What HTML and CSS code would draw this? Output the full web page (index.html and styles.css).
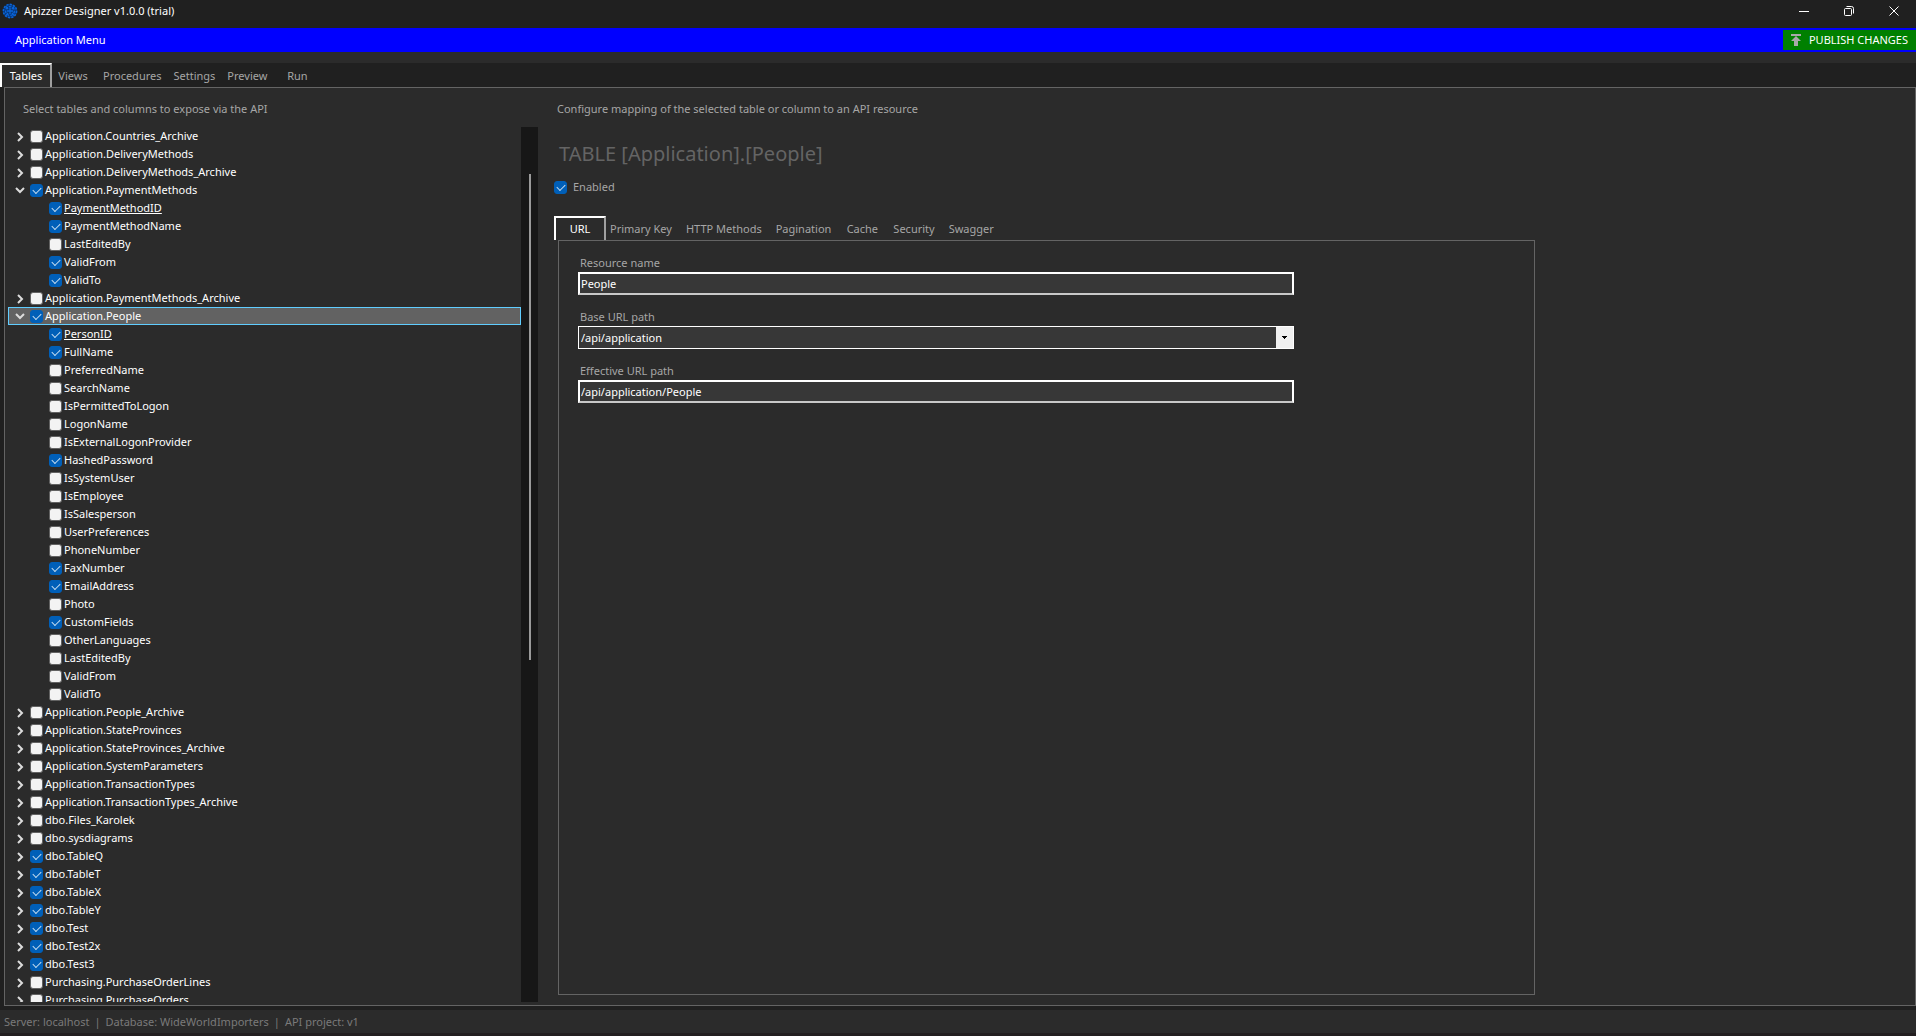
FILE: index.html
```
<!DOCTYPE html>
<html lang="en">
<head>
    <meta charset="UTF-8">
    <title>Apizzer Designer v1.0.0 (trial)</title>
    <link rel="stylesheet" href="styles.css">
</head>
<body>
    <header class="titlebar">
        <svg class="logo" width="16" height="16" viewBox="0 0 16 16" fill="none" stroke="#0a64d8">
            <circle cx="8" cy="8" r="7" fill="#08387a" stroke="none"/>
            <circle cx="8" cy="8" r="6.6" stroke-width="1.6" stroke-dasharray="2.2 1.2"/>
            <circle cx="8" cy="8" r="4.4" stroke-width="1.4" stroke-dasharray="2.6 1.2"/>
            <path d="M8 5v6M5 8h6M4 3.5l2 2.5M12 3.5L10 6M4 12.5L6 10M12 12.5L10 10" stroke-width="1.3"/>
        </svg>
        <span class="app-name">Apizzer Designer v1.0.0 (trial)</span>
        <div class="window-buttons">
            <button aria-label="Minimize"><svg width="10" height="10" stroke="#fff" fill="none"><path d="M0 5.5h10"/></svg></button>
            <button aria-label="Restore"><svg width="10" height="10" stroke="#fff" fill="none"><rect x="0.5" y="2.5" width="7" height="7" rx="1"/><path d="M2.5 0.5h5a2 2 0 0 1 2 2v5"/></svg></button>
            <button aria-label="Close"><svg width="10" height="10" stroke="#fff" fill="none"><path d="M0.5 0.5l9 9M9.5 0.5l-9 9"/></svg></button>
        </div>
    </header>

    <div class="menubar">
        <button class="menu-item">Application Menu</button>
        <button class="publish">
            <svg width="10" height="12" viewBox="0 0 10 12" fill="#a9a9a9"><path d="M0 0h10v2H0zM5 2l5 5H7v5H3V7H0z"/></svg>
            PUBLISH CHANGES
        </button>
    </div>

    <nav class="tabs main-tabs">
        <button class="tab active">Tables</button>
        <button class="tab">Views</button>
        <button class="tab">Procedures</button>
        <button class="tab">Settings</button>
        <button class="tab">Preview</button>
        <button class="tab">Run</button>
    </nav>

    <main class="page">
        <section class="left">
            <p class="hint">Select tables and columns to expose via the API</p>
            <div class="tree-box">
                <ul class="tree" id="tree"></ul>
                <div class="scrollbar"><div class="thumb"></div></div>
            </div>
        </section>

        <section class="right">
            <p class="hint">Configure mapping of the selected table or column to an API resource</p>
            <h1>TABLE [Application].[People]</h1>
            <div class="enabled">
                <input type="checkbox" id="enabled" checked>
                <label for="enabled">Enabled</label>
            </div>

            <nav class="tabs sub-tabs">
                <button class="tab active">URL</button>
                <button class="tab">Primary Key</button>
                <button class="tab">HTTP Methods</button>
                <button class="tab">Pagination</button>
                <button class="tab">Cache</button>
                <button class="tab">Security</button>
                <button class="tab">Swagger</button>
            </nav>

            <div class="panel">
                <div class="field">
                    <label for="resource">Resource name</label>
                    <input type="text" id="resource" value="People">
                </div>
                <div class="field">
                    <label for="base">Base URL path</label>
                    <div class="combo">
                        <select id="base">
                            <option>/api/application</option>
                        </select>
                        <span class="arrow"><svg width="5" height="3"><path d="M0 0h5v1H4v1H3v1H2V2H1V1H0z"/></svg></span>
                    </div>
                </div>
                <div class="field">
                    <label for="effective">Effective URL path</label>
                    <input type="text" id="effective" value="/api/application/People" readonly>
                </div>
            </div>
        </section>
    </main>

    <footer class="statusbar">
        <span>Server: localhost</span>
        <span>|</span>
        <span>Database: WideWorldImporters</span>
        <span>|</span>
        <span>API project: v1</span>
    </footer>

    <script>
        // "+" = exposed, "_" = primary key
        var tables = [
            { name: 'Application.Countries_Archive' },
            { name: 'Application.DeliveryMethods' },
            { name: 'Application.DeliveryMethods_Archive' },
            { name: '+Application.PaymentMethods', columns: ['+_PaymentMethodID', '+PaymentMethodName', 'LastEditedBy', '+ValidFrom', '+ValidTo'] },
            { name: 'Application.PaymentMethods_Archive' },
            { name: '+Application.People', selected: true, columns: [
                '+_PersonID', '+FullName', 'PreferredName', 'SearchName', 'IsPermittedToLogon', 'LogonName',
                'IsExternalLogonProvider', '+HashedPassword', 'IsSystemUser', 'IsEmployee', 'IsSalesperson',
                'UserPreferences', 'PhoneNumber', '+FaxNumber', '+EmailAddress', 'Photo', '+CustomFields',
                'OtherLanguages', 'LastEditedBy', 'ValidFrom', 'ValidTo'] },
            { name: 'Application.People_Archive' },
            { name: 'Application.StateProvinces' },
            { name: 'Application.StateProvinces_Archive' },
            { name: 'Application.SystemParameters' },
            { name: 'Application.TransactionTypes' },
            { name: 'Application.TransactionTypes_Archive' },
            { name: 'dbo.Files_Karolek' },
            { name: 'dbo.sysdiagrams' },
            { name: '+dbo.TableQ' },
            { name: '+dbo.TableT' },
            { name: '+dbo.TableX' },
            { name: '+dbo.TableY' },
            { name: '+dbo.Test' },
            { name: '+dbo.Test2x' },
            { name: '+dbo.Test3' },
            { name: 'Purchasing.PurchaseOrderLines' },
            { name: 'Purchasing.PurchaseOrders' }
        ];
        var nextId = 1;

        function checkItem(text) {
            var checked = text.charAt(0) === '+';
            if (checked) text = text.slice(1);
            var key = text.charAt(0) === '_';
            if (key) text = text.slice(1);
            var id = 'node' + nextId++;
            return '<input type="checkbox" id="' + id + '"' + (checked ? ' checked' : '') + '>' +
                '<label for="' + id + '"' + (key ? ' class="key"' : '') + '>' + text + '</label>';
        }

        function showTree() {
            var html = '';
            tables.forEach(function (table) {
                var path = table.columns ? 'M1 3l4 4 4-4' : 'M3 2l4 4-4 4';
                html += '<li><div class="row' + (table.selected ? ' selected' : '') + '">';
                html += '<button class="expander" aria-label="Expand"><svg width="10" height="11" fill="none" stroke="#dcdcdc" stroke-width="2"><path d="' + path + '"/></svg></button>';
                html += checkItem(table.name) + '</div>';
                if (table.columns) {
                    html += '<ul>';
                    table.columns.forEach(function (column) {
                        html += '<li class="row column">' + checkItem(column) + '</li>';
                    });
                    html += '</ul>';
                }
                html += '</li>';
            });
            document.getElementById('tree').innerHTML = html;
        }

        showTree();
    </script>
</body>
</html>
```
FILE: styles.css
```
* {
    box-sizing: border-box;
}

body {
    margin: 0;
    height: 100vh;
    display: flex;
    flex-direction: column;
    background-color: #202020;
    color: #fff;
    font-family: "Noto Sans", "Open Sans", sans-serif;
    font-size: 11px;
    line-height: 18px;
}

button, input, select {
    font: inherit;
    color: inherit;
    margin: 0;
}

button {
    border: none;
    background: none;
    padding: 0;
}

ul {
    list-style: none;
    margin: 0;
    padding: 0;
}

p, h1 {
    margin: 0;
    font-weight: normal;
}

/* title and menu */
.titlebar {
    display: flex;
    align-items: center;
    height: 28px;
    padding: 0 0 6px 2px;
    gap: 6px;
}

.window-buttons {
    display: flex;
    margin-left: auto;
}

.window-buttons button {
    width: 45px;
    height: 20px;
}

.window-buttons svg {
    display: block;
    margin: auto;
}

.menubar {
    display: flex;
    align-items: center;
    justify-content: space-between;
    height: 24px;
    padding-left: 15px;
    background-color: #0000ff;
}

.publish {
    display: flex;
    align-items: center;
    gap: 8px;
    height: 20px;
    padding: 0 8px;
    background-color: #008000;
}

/* tabs */
.tabs {
    display: flex;
    height: 24px;
    color: #a6a6a6;
}

.main-tabs {
    border-top: 11px solid #2b2b2b;
    height: 35px;
}

.tab {
    min-width: 48px;
    padding: 2px 6px 0;
}

/* the selected tab overlaps its neighbour a little */
.tab.active {
    min-width: 52px;
    margin-right: -3px;
    padding-top: 0;
    color: #fff;
    background-color: #2b2b2b;
    border: 2px solid #fff;
    border-right-color: #a0a0a0;
    border-bottom: none;
}

/* content */
.page {
    flex: 1;
    min-height: 0;
    display: flex;
    gap: 11px;
    margin-left: 4px;
    padding: 12px 0 3px 3px;
    border: 1px solid #646464;
    background-color: #2b2b2b;
}

.hint {
    color: #a6a6a6;
}

.left {
    width: 530px;
    display: flex;
    flex-direction: column;
    gap: 9px;
}

.left .hint {
    padding-left: 15px;
}

.tree-box {
    flex: 1;
    min-height: 0;
    display: flex;
}

.tree {
    flex: 1;
    overflow: hidden;
}

.row {
    display: flex;
    align-items: center;
    height: 18px;
    padding-left: 6px;
    border: 1px solid transparent;
}

.row.selected {
    background-color: #626262;
    border-color: #60cdff;
}

.row.column {
    padding-left: 40px;
}

.row label {
    margin-left: 2px;
}

.expander {
    width: 10px;
    margin-right: 5px;
}

.expander svg {
    display: block;
}

.key {
    text-decoration: underline;
}

input[type="checkbox"] {
    appearance: none;
    width: 13px;
    height: 13px;
    border: 1px solid #626262;
    border-radius: 3px;
    background-color: #f3f3f3;
}

input[type="checkbox"]:checked {
    border-color: #005fb8;
    background-color: #005fb8;
    display: grid;
    place-items: center;
}

input[type="checkbox"]:checked::before {
    content: "";
    width: 7px;
    height: 4px;
    border-left: 1px solid #c4dcf0;
    border-bottom: 1px solid #c4dcf0;
    transform: rotate(-45deg);
    margin-bottom: 2px;
}

.scrollbar {
    width: 17px;
    padding-top: 47px;
    background-color: #171717;
}

.thumb {
    width: 2px;
    height: 486px;
    margin: 0 auto;
    background-color: #9a9a9a;
}

/* mapping */
.right {
    flex: 1;
    display: flex;
    flex-direction: column;
    padding: 0 380px 7px 0;
}

.right .hint {
    padding-left: 8px;
}

h1 {
    padding-left: 10px;
    margin-top: 21px;
    font-size: 20px;
    line-height: 30px;
    color: #646464;
}

.enabled {
    display: flex;
    align-items: center;
    gap: 6px;
    margin: 9px 0 20px 5px;
    color: #a6a6a6;
}

.sub-tabs {
    margin-left: 5px;
}

.sub-tabs .tab {
    padding-left: 7px;
    padding-right: 7px;
}

.panel {
    flex: 1;
    display: flex;
    flex-direction: column;
    gap: 13px;
    margin-left: 9px;
    padding: 13px 240px 0 19px;
    border: 1px solid #646464;
}

.field {
    display: flex;
    flex-direction: column;
}

.field label {
    padding-left: 2px;
    color: #a6a6a6;
}

.field input {
    height: 23px;
    padding: 0 1px;
    border: 2px solid #fff;
    border-bottom-color: #c8c8c8;
    background-color: #373737;
}

.combo {
    display: flex;
    height: 23px;
    border: 1px solid #fff;
    background-color: #373737;
}

.combo select {
    flex: 1;
    appearance: none;
    padding: 0 2px;
    border: none;
    background: none;
}

.arrow {
    display: grid;
    place-items: center;
    width: 17px;
    background-color: #f0f0f0;
}

.statusbar {
    display: flex;
    gap: 5px;
    height: 30px;
    padding: 3px 4px 0;
    border-top: 4px solid #202020;
    border-bottom: 3px solid #231f20;
    background-color: #2b2b2b;
    color: #7a7a7a;
}
```
